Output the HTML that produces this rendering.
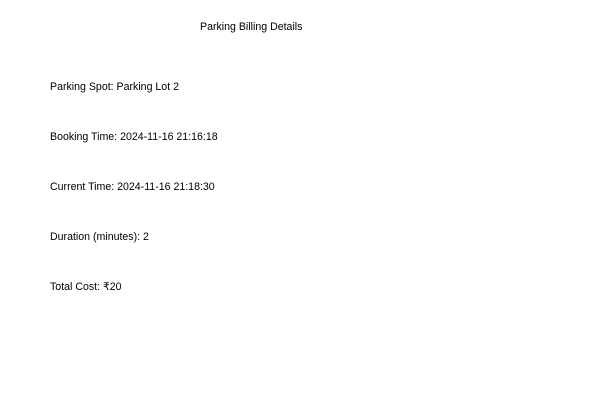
<!DOCTYPE html>
<html><head><style>
html,body{margin:0;padding:0;background:#fff;width:600px;height:400px;overflow:hidden}
body{font-family:"Liberation Sans",sans-serif;font-size:10.6px;color:#000;position:relative}
div{position:absolute;white-space:nowrap;line-height:12px}
</style></head><body>
<div style="left:200px;top:21px">Parking Billing Details</div>
<div style="left:50px;top:81px">Parking Spot: Parking Lot 2</div>
<div style="left:50px;top:131px">Booking Time: 2024-11-16 21:16:18</div>
<div style="left:50px;top:181px">Current Time: 2024-11-16 21:18:30</div>
<div style="left:50px;top:231px">Duration (minutes): 2</div>
<div style="left:50px;top:281px">Total Cost: ₹20</div>
</body></html>
